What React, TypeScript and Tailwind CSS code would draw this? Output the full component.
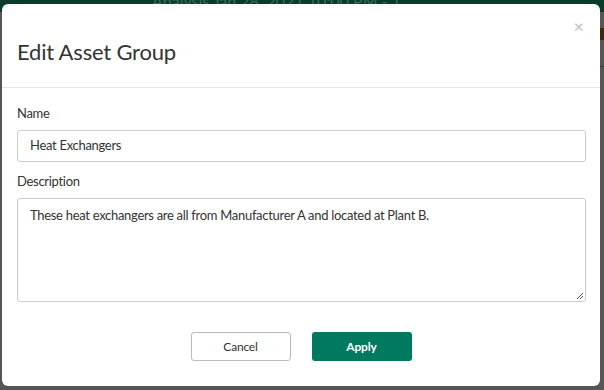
import React from "react";

export default function App() {
  const font = { fontFamily: '"Lato", "Open Sans", sans-serif' };
  return (
    <div className="relative w-[604px] h-[390px] overflow-hidden bg-[#555555]" style={font}>
      <div className="absolute left-0 top-0 w-full h-[12px] bg-[#0b3b2c]">
        <span className="absolute left-[152px] top-[-7px] text-[16px] leading-[16px] text-[#3d6a5a] whitespace-nowrap">Analysis Jan 28, 2021 10:00 PM - 1</span>
      </div>
      <div className="absolute right-0 top-[28px] w-[4px] h-[12px] bg-[#3a2a10]" />
      <div className="absolute right-0 top-[66px] w-[4px] h-[1px] bg-[#1f4a3a]" />
      <div className="relative ml-[2px] mt-[4px] w-[598px] h-[382px] bg-white rounded-[6px] flex flex-col">
        <div className="h-[84px] border-b border-[#e5e5e5] flex items-center px-[15px] relative">
          <h1 className="text-[22px] text-[#333333] mt-[12px] tracking-[-0.2px]">Edit Asset Group</h1>
          <span className="absolute right-[16px] top-[13px] text-[18px] text-[#c0c0c0] leading-none">×</span>
        </div>
        <div className="px-[15px] pr-[14px] flex flex-col text-[13px] tracking-[-0.3px] text-[#333333]">
          <label className="mt-[15px] leading-[20px]">Name</label>
          <div className="mt-[7px] h-[32px] border border-[#cccccc] rounded-[3px] flex items-center px-[12px]">
            Heat Exchangers
          </div>
          <label className="mt-[9px] leading-[20px]">Description</label>
          <div className="relative mt-[7px] h-[104px] border border-[#cccccc] rounded-[3px] px-[12px] pt-[6px] leading-[20px]">
            These heat exchangers are all from Manufacturer A and located at Plant B.
            <svg className="absolute right-[1px] bottom-[1px]" width="8" height="8" viewBox="0 0 8 8">
              <line x1="1" y1="7" x2="7" y2="1" stroke="#555" strokeWidth="1" />
              <line x1="4" y1="7" x2="7" y2="4" stroke="#555" strokeWidth="1" />
            </svg>
          </div>
        </div>
        <div className="flex justify-center gap-[21px] mt-[30px] tracking-[-0.2px]">
          <button className="w-[100px] h-[29px] border border-[#bbbbbb] rounded-[3px] bg-white text-[12px] text-[#333333]">Cancel</button>
          <button className="w-[100px] h-[29px] rounded-[3px] bg-[#007a5e] text-[12px] font-bold text-white">Apply</button>
        </div>
      </div>
    </div>
  );
}
